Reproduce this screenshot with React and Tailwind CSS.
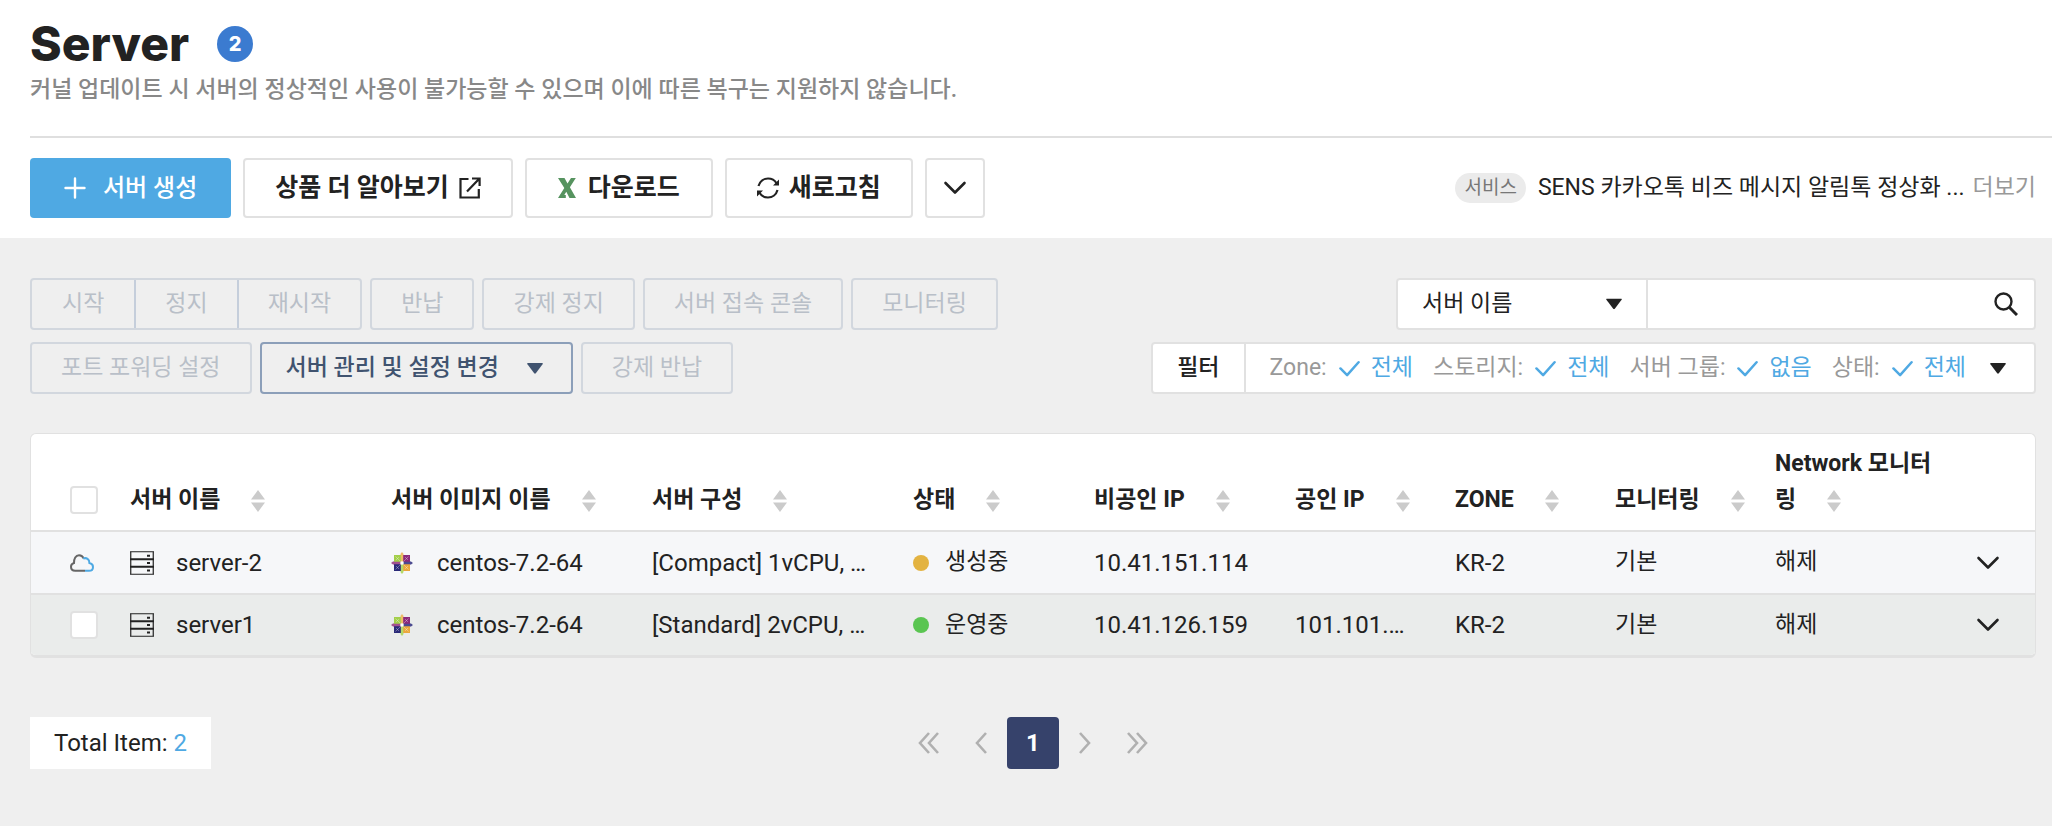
import React from "react";

const OUTLINE =
  "inline-flex h-15 items-center rounded-sm border-2 border-[#e1e1e1] bg-white text-[25px] font-bold text-[#222]";
const DISABLED =
  "h-[52px] rounded-sm border-2 border-[#d2d7de] px-[29px] text-[23px] text-[#b9bfc8]";

function Chevron() {
  return (
    <svg width="24" height="24" viewBox="0 0 24 24" fill="none" stroke="#222" strokeWidth="2.6" strokeLinecap="round" strokeLinejoin="round" aria-hidden="true">
      <path d="M2.5 7 12 16.500 21.500 7" />
    </svg>
  );
}

function Triangle({ className }) {
  return (
    <svg className={className} width="16" height="11" viewBox="0 0 16 11" fill="currentColor" aria-hidden="true">
      <path d="M.8 0h14.4q1 .3.4 1.3L8.8 10.2q-.8.9-1.6 0L.4 1.3Q-.2.3.8 0Z" />
    </svg>
  );
}

function SortIcon() {
  return (
    <svg className="ml-[31px] inline-block align-middle" width="14" height="22" viewBox="0 0 14 22" fill="#cbcbcb" aria-hidden="true">
      <path d="M7 0 14 9.5H0ZM7 22 0 12.5h14Z" />
    </svg>
  );
}

function ServerIcon() {
  return (
    <svg width="24" height="24" viewBox="0 0 24 24" fill="none" stroke="#222" aria-hidden="true">
      <path d="M.75 1v22M23.25 1v22M0 .75h24M0 23.25h24" strokeWidth="1.2" />
      <path d="M0 8.2h24M0 15.8h24" strokeWidth="2" />
      <path d="M17 4.8h3M17 12h3M17 19.6h3" strokeWidth="2" />
    </svg>
  );
}

function CloudIcon() {
  return (
    <svg width="24" height="18" viewBox="0 0 24 18" fill="none" strokeWidth="2" aria-hidden="true">
      <path d="M15 16.8H5.2C2.6 16.8 1 15 1 12.8c0-2 1.300-3.400 3-3.800C3.800 4.500 5.800 1.200 9 1.200c2.300 0 3.900 1.200 4.600 3.200" stroke="#666" />
      <path d="M13.200 4.600c3.300-1.400 6.300.6 6.200 4.400 2.300.5 3.600 2 3.600 3.900 0 2.300-1.700 3.900-4 3.900h-4" stroke="#4fa9e3" />
    </svg>
  );
}

function CentosIcon() {
  return (
    <svg width="22" height="22" viewBox="0 0 22 22" aria-hidden="true">
      <path d="M3 3h8v8H3Z" fill="#a3cf4a" />
      <path d="M11 3h8v8h-8Z" fill="#8b2a7b" />
      <path d="M3 11h8v8H3Z" fill="#2a2a78" />
      <path d="M11 11h8v8h-8Z" fill="#eba83c" />
      <path d="M4.500 4.500l13 13M17.500 4.500l-13 13M5 8l3-3M14 5l3 3M5 14l3 3M14 17l3-3" stroke="#fff" strokeOpacity=".4" strokeWidth=".8" />
      <path d="m11 0 2 2.600h-.8V10H9.800V2.600H9Z" fill="#eebb66" />
      <path d="m22 11-2.600 2v-.8H12V9.800h7.400V9Z" fill="#4b4a90" />
      <path d="m11 22-2-2.600h.8V12h2.400v7.400h.8Z" fill="#b4d96a" />
      <path d="m0 11 2.600-2v.8H10v2.400H2.600v.8Z" fill="#a2508f" />
      <circle cx="11" cy="11" r="1.800" fill="#fff" />
    </svg>
  );
}

const columns = ["서버 이름", "서버 이미지 이름", "서버 구성", "상태", "비공인 IP", "공인 IP", "ZONE", "모니터링", "Network 모니터링"];

const servers = [
  { name: "server-2", image: "centos-7.2-64", spec: "[Compact] 1vCPU, …", status: "생성중", creating: true, privateIp: "10.41.151.114", publicIp: "" },
  { name: "server1", image: "centos-7.2-64", spec: "[Standard] 2vCPU, …", status: "운영중", creating: false, privateIp: "10.41.126.159", publicIp: "101.101.…" },
];

const filters = [
  ["Zone:", "전체"],
  ["스토리지:", "전체"],
  ["서버 그룹:", "없음"],
  ["상태:", "전체"],
];

const CHECKBOX = "block size-7 appearance-none rounded-sm border-2 border-[#e1e1e1] bg-white checked:bg-[#4fa9e3]";

function Header() {
  return (
    <header className="bg-white pt-4 pb-5 pl-[30px]">
      <div className="flex h-14 items-center gap-7">
        <h1 className="font-[Inter,sans-serif] text-5xl leading-14 font-extrabold">Server</h1>
        <span className="flex size-9 items-center justify-center rounded-full bg-[#3b7bd0] font-[Inter,sans-serif] text-xl font-extrabold text-white">2</span>
      </div>
      <p className="mt-[2px] text-[23px] leading-8 font-medium text-[#888]">
        커널 업데이트 시 서버의 정상적인 사용이 불가능할 수 있으며 이에 따른 복구는 지원하지 않습니다.
      </p>
      <div className="mt-[30px] flex items-center justify-between border-t-2 border-[#dfdfdf] pt-5 pr-4">
        <div className="flex gap-3">
          <button type="button" className="flex h-15 items-center gap-[17px] rounded-sm bg-[#4fa9e3] px-[34px] text-2xl font-medium text-white">
            <svg width="22" height="22" viewBox="0 0 22 22" stroke="currentColor" strokeWidth="2.400" strokeLinecap="round" aria-hidden="true">
              <path d="M11 1.500v19M1.500 11h19" />
            </svg>
            서버 생성
          </button>
          <button type="button" className={OUTLINE + " gap-[10px] px-[30px]"}>
            상품 더 알아보기
            <svg width="22" height="22" viewBox="0 0 22 22" fill="none" stroke="currentColor" strokeWidth="2.200" aria-hidden="true">
              <path d="M9.500 2H1.500v18.500h18.300V12" />
              <path d="M8 14.500 19.500 2.500M13 1.500h7.600v7.600" />
            </svg>
          </button>
          <button type="button" className={OUTLINE + " gap-3 px-[31px]"}>
            <svg width="18" height="20" viewBox="0 0 18 20" fill="#56935f" aria-hidden="true">
              <path d="M0 0h6.500l3 5.500L13 0h4.800l-5.900 9.300L18 20h-6.500L8.300 13.800 6.300 17h1.500V20H0l6.300-10Z" />
            </svg>
            다운로드
          </button>
          <button type="button" className={OUTLINE + " gap-[10px] px-[30px]"}>
            <svg width="22" height="22" viewBox="0 0 22 22" fill="none" stroke="currentColor" strokeWidth="2.200" aria-hidden="true">
              <path d="M1.500 9C2.700 4.500 6.500 1.500 11 1.500c3.700 0 6.800 1.800 8.500 4.700M20.500 13c-1.200 4.500-5 7.500-9.500 7.500-3.700 0-6.800-1.800-8.500-4.700" />
              <path d="M22 2.500v6h-6ZM0 19.500v-6h6Z" fill="currentColor" stroke="none" />
            </svg>
            새로고침
          </button>
          <button type="button" aria-label="더 많은 작업" className={OUTLINE + " w-15 justify-center"}>
            <Chevron />
          </button>
        </div>
        <div className="flex items-center text-[23px]">
          <span className="mr-3 rounded-full bg-[#ebebeb] px-[9px] text-[19px] leading-[30px] text-[#777]">서비스</span>
          <a href="#notice" className="mr-2">SENS 카카오톡 비즈 메시지 알림톡 정상화 ...</a>
          <a href="#more" className="text-[#999]">더보기</a>
        </div>
      </div>
    </header>
  );
}

function Toolbar() {
  return (
    <div className="flex items-start justify-between">
      <div className="flex flex-col gap-3">
        <div className="flex gap-2">
          <div className="flex h-[52px] divide-x-2 divide-[#c5cedb] rounded-sm border-2 border-[#d2d7de] text-[23px] text-[#b9bfc8]">
            <button type="button" disabled className="px-[30px]">시작</button>
            <button type="button" disabled className="px-[29px]">정지</button>
            <button type="button" disabled className="px-[29px]">재시작</button>
          </div>
          <button type="button" disabled className={DISABLED}>반납</button>
          <button type="button" disabled className={DISABLED}>강제 정지</button>
          <button type="button" disabled className={DISABLED}>서버 접속 콘솔</button>
          <button type="button" disabled className={DISABLED}>모니터링</button>
        </div>
        <div className="flex gap-2">
          <button type="button" disabled className={DISABLED}>포트 포워딩 설정</button>
          <button type="button" className="flex h-[52px] items-center gap-7 rounded-sm border-2 border-[#8c9fb9] pr-7 pl-6 text-[23px] font-medium text-[#40536f]">
            서버 관리 및 설정 변경
            <Triangle />
          </button>
          <button type="button" disabled className={DISABLED}>강제 반납</button>
        </div>
      </div>
      <div className="flex flex-col items-end gap-3">
        <div className="flex h-[52px] w-[640px] items-stretch rounded-sm border-2 border-[#e1e1e1] bg-white text-[23px]">
          <div className="relative w-[250px] border-r-2 border-[#e1e1e1]">
            <select aria-label="검색 조건" className="h-full w-full appearance-none bg-transparent pl-6 outline-none">
              <option>서버 이름</option>
            </select>
            <Triangle className="pointer-events-none absolute top-1/2 right-6 -translate-y-1/2" />
          </div>
          <input aria-label="검색어" className="min-w-0 flex-1 bg-transparent px-4 outline-none" />
          <button type="button" aria-label="검색" className="px-4">
            <svg width="24" height="24" viewBox="0 0 24 24" fill="none" stroke="currentColor" strokeWidth="2.400" aria-hidden="true">
              <circle cx="9.500" cy="9.500" r="8" />
              <path d="m15 15 8 8" strokeWidth="3" />
            </svg>
          </button>
        </div>
        <div className="flex h-[52px] items-stretch rounded-sm border-2 border-[#e1e1e1] bg-white text-[23px]">
          <span className="flex items-center border-r-2 border-[#e1e1e1] px-6 font-medium">필터</span>
          <button type="button" className="flex items-center gap-5 pr-7 pl-6">
            {filters.map(([label, value]) => (
              <span key={label} className="flex items-center text-[#999]">
                {label}
                <svg className="mr-[11px] ml-3" width="21" height="18" viewBox="0 0 22 18" fill="none" stroke="#4fa9e3" strokeWidth="2.600" strokeLinecap="round" strokeLinejoin="round" aria-hidden="true">
                  <path d="m1.500 9.500 7 7L20.500 3" />
                </svg>
                <span className="text-[#4fa9e3]">{value}</span>
              </span>
            ))}
            <Triangle className="ml-1" />
          </button>
        </div>
      </div>
    </div>
  );
}

function ServerTable() {
  return (
    <div className="mt-[39px] overflow-hidden rounded-md border border-b-3 border-[#e1e1e1] bg-white">
      <table className="w-full table-fixed border-collapse text-left text-2xl">
        <colgroup>
          <col className="w-[99px]" />
          <col className="w-[261px]" />
          <col className="w-[261px]" />
          <col className="w-[261px]" />
          <col className="w-[181px]" />
          <col className="w-[201px]" />
          <col className="w-[160px]" />
          <col className="w-[160px]" />
          <col className="w-[160px]" />
          <col />
          <col className="w-[83px]" />
        </colgroup>
        <thead>
          <tr className="h-[97px] border-b-2 border-[#e1e1e1] align-bottom text-[23px]">
            <th className="pb-4 pl-[39px]">
              <input type="checkbox" aria-label="전체 선택" className={CHECKBOX} />
            </th>
            {columns.map((label) => (
              <th key={label} className="pr-3 pb-3 leading-9 font-bold break-all">
                {label}
                <SortIcon />
              </th>
            ))}
            <th aria-label="상세" />
          </tr>
        </thead>
        <tbody>
          {servers.map((s) => (
            <tr key={s.name} className={s.creating ? "h-[63px] border-b-2 border-[#e1e1e1] bg-[#f6f7f9]" : "h-[61px] bg-[#eaeceb]"}>
              <td className="pl-[39px]">
                {s.creating ? <CloudIcon /> : <input type="checkbox" aria-label={s.name + " 선택"} className={CHECKBOX} />}
              </td>
              <td>
                <div className="flex items-center gap-[22px]"><ServerIcon />{s.name}</div>
              </td>
              <td>
                <div className="flex items-center gap-6"><CentosIcon />{s.image}</div>
              </td>
              <td className="whitespace-nowrap">{s.spec}</td>
              <td>
                <div className="flex items-center gap-4 text-[23px]">
                  <span className={s.creating ? "size-4 rounded-full bg-[#e3b341]" : "size-4 rounded-full bg-[#5ac551]"} />
                  {s.status}
                </div>
              </td>
              <td>{s.privateIp}</td>
              <td>{s.publicIp}</td>
              <td>KR-2</td>
              <td className="text-[23px]">기본</td>
              <td className="text-[23px]">해제</td>
              <td>
                <button type="button" aria-label={s.name + " 상세 보기"} className="block pl-6"><Chevron /></button>
              </td>
            </tr>
          ))}
        </tbody>
      </table>
    </div>
  );
}

function Arrow({ label, d, width }) {
  return (
    <button type="button" aria-label={label} className="flex h-[52px] w-[52px] items-center justify-center">
      <svg width={width} height="22" viewBox={"0 0 " + width + " 22"} fill="none" stroke="#b0b0b0" strokeWidth="2.600" aria-hidden="true">
        <path d={d} />
      </svg>
    </button>
  );
}

function Footer() {
  return (
    <footer className="mt-[59px] grid grid-cols-[1fr_auto_1fr] items-center text-2xl">
      <p className="justify-self-start bg-white px-6 leading-[52px]">
        Total Item: <span className="text-[#4fa9e3]">2</span>
      </p>
      <nav aria-label="페이지" className="flex items-center">
        <Arrow label="처음" width={22} d="M11 1 2 11l9 10M20 1l-9 10 9 10" />
        <Arrow label="이전" width={14} d="M12 1 3 11l9 10" />
        <button type="button" aria-current="page" className="h-[52px] w-[52px] rounded-sm bg-[#36426b] font-bold text-white">1</button>
        <Arrow label="다음" width={14} d="m2 1 9 10-9 10" />
        <Arrow label="마지막" width={22} d="m2 1 9 10-9 10M11 1l9 10-9 10" />
      </nav>
    </footer>
  );
}

export default function App() {
  return (
    <div className="min-h-screen bg-[#efefef] font-[Roboto,'Noto_Sans_CJK_KR',sans-serif] text-[#222]">
      <Header />
      <main className="pt-10 pr-4 pb-14 pl-[30px]">
        <Toolbar />
        <ServerTable />
        <Footer />
      </main>
    </div>
  );
}
